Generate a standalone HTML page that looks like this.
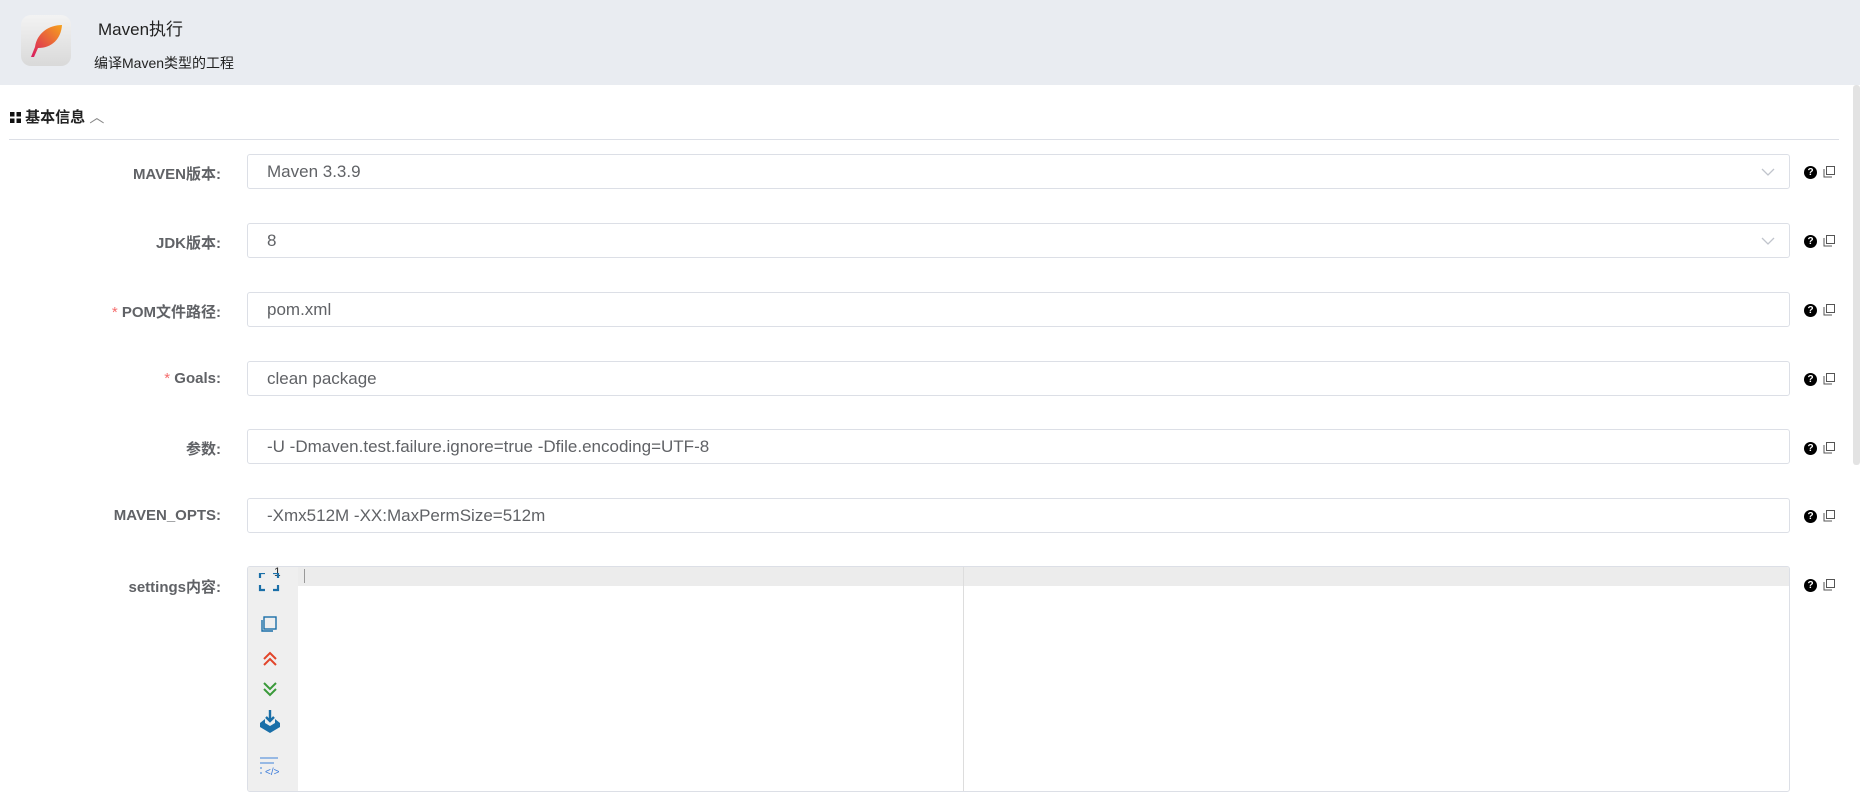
<!DOCTYPE html>
<html><head><meta charset="utf-8"><style>
body{margin:0;width:1860px;height:812px;overflow:hidden;background:#fff;font-family:"Liberation Sans","Noto Sans CJK SC",sans-serif;position:relative;color:#303133}
.hdr{position:absolute;left:0;top:0;width:1860px;height:85px;background:#e9ecf1}
.ico{position:absolute;left:21px;top:15px;width:50px;height:51px;border-radius:10px;background:linear-gradient(#f3f3f3,#d9d9d9)}
.t1{position:absolute;left:98px;top:15px;font-size:17px;color:#222}
.t2{position:absolute;left:94px;top:53px;font-size:14px;color:#222}
.sec{position:absolute;left:10px;top:106px;font-size:15px;font-weight:bold;color:#222}
.line{position:absolute;left:9px;top:139px;width:1830px;height:1px;background:#dcdfe6}
.sb{position:absolute;left:1853px;top:85px;width:7px;height:380px;background:#e3e3e3;border-radius:3px}
.lab{position:absolute;width:221px;text-align:right;font-size:15px;font-weight:bold;color:#606266}
.lab i{color:#f56c6c;font-style:normal;font-weight:normal}
.inp{position:absolute;left:247px;width:1541px;height:33px;border:1px solid #dcdfe6;border-radius:3px;font-size:17px;color:#606266;line-height:33px;box-sizing:content-box}
.inp span{margin-left:19px}
.q{position:absolute;left:1804px;width:13px;height:13px;border-radius:50%;background:#000;color:#fff;font-size:10px;font-weight:bold;text-align:center;line-height:13px}
.cp{position:absolute;left:1823px;width:12px;height:12px}
</style></head><body>
<div class="hdr"></div>
<div class="ico"><svg width="50" height="51" viewBox="0 0 50 51"><defs><linearGradient id="g" x1="1" y1="0" x2="0" y2="1"><stop offset="0" stop-color="#f7a21b"/><stop offset="1" stop-color="#d81b60"/></linearGradient></defs><path d="M41 10 C28 10 16 18 14 32 L10 42 L13 42 L17 33 C31 33 40 24 41 10Z" fill="url(#g)"/></svg></div>
<div class="t1">Maven执行</div>
<div class="t2">编译Maven类型的工程</div>
<div class="sec"><svg width="11" height="11" style="vertical-align:-1px"><rect x="0" y="0" width="4.5" height="4.5" fill="#111"/><rect x="6.5" y="0" width="4.5" height="4.5" fill="#111"/><rect x="0" y="6.5" width="4.5" height="4.5" fill="#111"/><rect x="6.5" y="6.5" width="4.5" height="4.5" fill="#111"/></svg> 基本信息 <span style="font-weight:normal;color:#888">︿</span></div>
<div class="line"></div>
<div class="sb"></div>

<div class="lab" style="top:163px">MAVEN版本:</div>
<div class="inp" style="top:154px"><span>Maven 3.3.9</span><svg style="position:absolute;right:14px;top:13px" width="14" height="8"><path d="M1 1 L7 7 L13 1" fill="none" stroke="#c0c4cc" stroke-width="1.3"/></svg></div>
<div class="lab" style="top:232px">JDK版本:</div>
<div class="inp" style="top:223px"><span>8</span><svg style="position:absolute;right:14px;top:13px" width="14" height="8"><path d="M1 1 L7 7 L13 1" fill="none" stroke="#c0c4cc" stroke-width="1.3"/></svg></div>
<div class="lab" style="top:301px"><i>*</i> POM文件路径:</div>
<div class="inp" style="top:292px"><span>pom.xml</span></div>
<div class="lab" style="top:370px"><i>*</i> Goals:</div>
<div class="inp" style="top:361px"><span>clean package</span></div>
<div class="lab" style="top:438px">参数:</div>
<div class="inp" style="top:429px"><span>-U -Dmaven.test.failure.ignore=true -Dfile.encoding=UTF-8</span></div>
<div class="lab" style="top:507px">MAVEN_OPTS:</div>
<div class="inp" style="top:498px"><span>-Xmx512M -XX:MaxPermSize=512m</span></div>
<div class="lab" style="top:576px">settings内容:</div>

<div style="position:absolute;left:247px;top:566px;width:1541px;height:224px;border:1px solid #dcdfe6;border-radius:3px;overflow:hidden">
<div style="position:absolute;left:0;top:0;width:1541px;height:19px;background:#ececec"></div>
<div style="position:absolute;left:0;top:0;width:50px;height:224px;background:#efefef"></div>
<div style="position:absolute;left:56px;top:2px;width:1px;height:14px;background:#999"></div>
<div style="position:absolute;left:715px;top:0;width:1px;height:224px;background:#ddd"></div>
<div style="position:absolute;left:26px;top:-2px;font-size:12px;color:#333">1</div>
<svg style="position:absolute;left:10px;top:6px" width="24" height="215" viewBox="0 0 24 215">
<path d="M2 5V0H7M15 0H20V5M20 12V17H15M7 17H2V12" fill="none" stroke="#1a6fa8" stroke-width="2.2"/>
<rect x="6" y="44" width="12" height="12" fill="none" stroke="#1a6fa8" stroke-width="1.4"/><path d="M4 47V58H15" fill="none" stroke="#1a6fa8" stroke-width="1.4"/>
<path d="M6 86L12 80L18 86M6 92L12 86L18 92" fill="none" stroke="#e2452a" stroke-width="2"/>
<path d="M6 110L12 116L18 110M6 116L12 122L18 116" fill="none" stroke="#3a9a3a" stroke-width="2"/>
<path d="M12 137V148M8 144L12 148L16 144" fill="none" stroke="#1a6fa8" stroke-width="2.4"/><path d="M2 150L7 146V150L12 153L17 150V146L22 150V154L12 160L2 154Z" fill="#1a6fa8"/>
<path d="M2 185H20M2 190H16M2 195H4M2 200H4" stroke="#7aa7e0" stroke-width="1.4"/><text x="7" y="202" font-size="10" fill="#3a7ad9" font-family="Liberation Sans">&lt;/&gt;</text>
</svg>
</div>

<div class="q" style="top:166px">?</div><svg class="cp" style="top:166px" viewBox="0 0 12 12"><rect x="3.5" y="0.5" width="8" height="8" fill="none" stroke="#555"/><path d="M1 3V11H9" fill="none" stroke="#555"/></svg>
<div class="q" style="top:235px">?</div><svg class="cp" style="top:235px" viewBox="0 0 12 12"><rect x="3.5" y="0.5" width="8" height="8" fill="none" stroke="#555"/><path d="M1 3V11H9" fill="none" stroke="#555"/></svg>
<div class="q" style="top:304px">?</div><svg class="cp" style="top:304px" viewBox="0 0 12 12"><rect x="3.5" y="0.5" width="8" height="8" fill="none" stroke="#555"/><path d="M1 3V11H9" fill="none" stroke="#555"/></svg>
<div class="q" style="top:373px">?</div><svg class="cp" style="top:373px" viewBox="0 0 12 12"><rect x="3.5" y="0.5" width="8" height="8" fill="none" stroke="#555"/><path d="M1 3V11H9" fill="none" stroke="#555"/></svg>
<div class="q" style="top:442px">?</div><svg class="cp" style="top:442px" viewBox="0 0 12 12"><rect x="3.5" y="0.5" width="8" height="8" fill="none" stroke="#555"/><path d="M1 3V11H9" fill="none" stroke="#555"/></svg>
<div class="q" style="top:510px">?</div><svg class="cp" style="top:510px" viewBox="0 0 12 12"><rect x="3.5" y="0.5" width="8" height="8" fill="none" stroke="#555"/><path d="M1 3V11H9" fill="none" stroke="#555"/></svg>
<div class="q" style="top:579px">?</div><svg class="cp" style="top:579px" viewBox="0 0 12 12"><rect x="3.5" y="0.5" width="8" height="8" fill="none" stroke="#555"/><path d="M1 3V11H9" fill="none" stroke="#555"/></svg>
</body></html>
